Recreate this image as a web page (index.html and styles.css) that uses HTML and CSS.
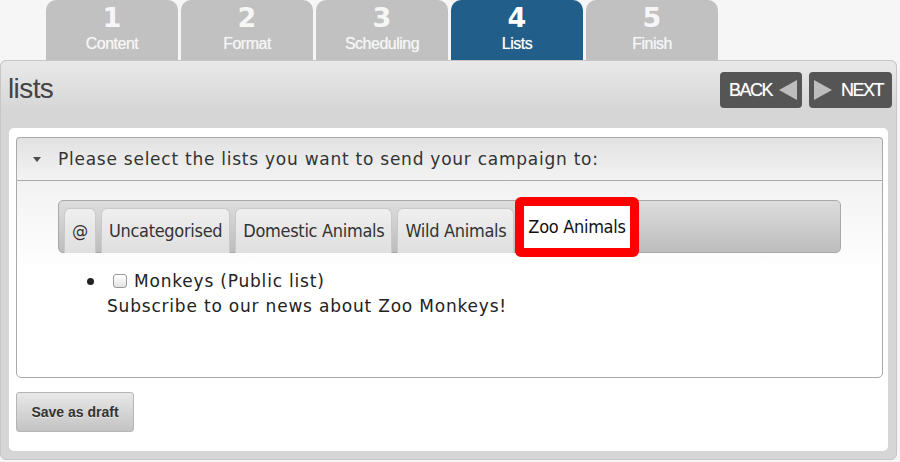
FILE: index.html
```html
<!DOCTYPE html>
<html lang="en">

<head>
    <meta charset="UTF-8">
    <meta name="viewport" content="width=device-width, initial-scale=1.0">
    <title>Campaign - Lists</title>
    <link rel="stylesheet" href="styles.css">
</head>

<body>
    <div class="wizard">
        <ol class="steps">
            <li class="step"><span class="num">1</span><span class="label">Content</span></li>
            <li class="step"><span class="num">2</span><span class="label">Format</span></li>
            <li class="step"><span class="num">3</span><span class="label">Scheduling</span></li>
            <li class="step current"><span class="num">4</span><span class="label">Lists</span></li>
            <li class="step"><span class="num">5</span><span class="label">Finish</span></li>
        </ol>

        <div class="panel">
            <div class="panel-head">
                <h1>lists</h1>
                <div class="nav">
                    <a class="nav-btn back" href="#">BACK<span class="arrow left"></span></a>
                    <a class="nav-btn next" href="#"><span class="arrow right"></span>NEXT</a>
                </div>
            </div>

            <div class="panel-body">
                <div class="section">
                    <h3 class="section-head"><span class="caret"></span>Please select the lists you want to send your campaign to:</h3>
                    <div class="section-body">
                        <ul class="cat-tabs">
                            <li>@</li>
                            <li>Uncategorised</li>
                            <li>Domestic Animals</li>
                            <li>Wild Animals</li>
                            <li class="active">Zoo Animals</li>
                        </ul>
                        <ul class="lists">
                            <li>
                                <label><input type="checkbox"> Monkeys (Public list)</label><br>
                                Subscribe to our news about Zoo Monkeys!
                            </li>
                        </ul>
                    </div>
                </div>
                <button class="draft" type="button">Save as draft</button>
            </div>
        </div>
    </div>
</body>

</html>
```

FILE: styles.css
```css
* {
    margin: 0;
    padding: 0;
    box-sizing: border-box;
}

ul,
ol {
    list-style: none;
}

body {
    background: #f6f6f6;
    font-family: "DejaVu Sans", Verdana, sans-serif;
    color: #333;
}

.wizard {
    width: 897px;
}

/* step tabs */
.steps {
    display: flex;
    gap: 3px;
    padding-left: 46px;
}

.step {
    width: 132px;
    height: 60px;
    padding-top: 3px;
    border-radius: 10px 10px 0 0;
    background: #c1c1c1;
    color: #f6f6f6;
    text-align: center;
}

.step.current {
    background: #215e8a;
    color: #fff;
}

.step .num {
    display: block;
    font: bold 27px/30px "DejaVu Sans", sans-serif;
}

.step .label {
    display: block;
    margin-top: 2px;
    font: 16px/18px "Liberation Sans", Arial, sans-serif;
    letter-spacing: -0.5px;
    text-shadow: 0 0 1px rgba(255, 255, 255, 0.6);
}

/* main panel */
.panel {
    border: 1px solid #c6c6c6;
    border-radius: 6px;
    background: #d6d6d6;
}

.panel-head {
    height: 67px;
    padding: 11px 4px 0 7px;
    display: flex;
    justify-content: space-between;
    align-items: flex-start;
    border-radius: 6px 6px 0 0;
    background: linear-gradient(#e9e9e9, #d6d6d6 75%);
}

.panel-head h1 {
    margin-top: 2px;
    font: normal 28px/30px "Liberation Sans", Arial, sans-serif;
    letter-spacing: -0.6px;
    color: #444;
}

.nav {
    display: flex;
    gap: 7px;
}

.nav-btn {
    height: 36px;
    display: flex;
    align-items: center;
    gap: 7px;
    padding: 0 5px 0 9px;
    border-radius: 4px;
    background: #555;
    color: #fff;
    text-decoration: none;
    font: 18px/1 "Liberation Sans", Arial, sans-serif;
    letter-spacing: -1.5px;
    text-shadow: 0 0 1px rgba(255, 255, 255, 0.5);
}

.nav-btn.next {
    padding: 0 9px 0 5px;
    gap: 9px;
}

.arrow {
    width: 0;
    height: 0;
    border-top: 10px solid transparent;
    border-bottom: 10px solid transparent;
}

.arrow.left {
    border-right: 18px solid #bdbdbd;
}

.arrow.right {
    border-left: 18px solid #bdbdbd;
}

.panel-body {
    margin: 0 8px 8px;
    padding: 9px 5px 19px 7px;
    border-radius: 5px;
    background: #fff;
}

/* accordion section */
.section-head {
    height: 43px;
    display: flex;
    align-items: center;
    border: 1px solid #a9a9a9;
    border-bottom: 0;
    border-radius: 4px 4px 0 0;
    background: linear-gradient(#e2e2e2, #f3f3f3);
    font-weight: normal;
    font-size: 17px;
    letter-spacing: 0.75px;
    color: #333;
}

.caret {
    width: 0;
    height: 0;
    margin: 0 17px 0 16px;
    border-left: 4px solid transparent;
    border-right: 4px solid transparent;
    border-top: 5px solid #4a4a4a;
}

.section-body {
    padding: 19px 41px 59px;
    border: 1px solid #a9a9a9;
    border-radius: 0 0 5px 5px;
    background: linear-gradient(#f2f2f2, #fff 90px);
}

.cat-tabs {
    height: 53px;
    display: flex;
    align-items: flex-end;
    gap: 5px;
    padding: 0 5px;
    border: 1px solid #a9a9a9;
    border-radius: 5px;
    background: linear-gradient(#dddddd, #bdbdbd);
}

.cat-tabs li {
    height: 45px;
    margin-bottom: -1px;
    padding: 0 7px 2px;
    display: flex;
    align-items: center;
    border: 1px solid #c9c9c9;
    border-bottom: 0;
    border-radius: 6px 6px 0 0;
    background: linear-gradient(#efefef, #dfdfdf);
    font: 18px "DejaVu Sans Condensed", "DejaVu Sans", sans-serif;
    letter-spacing: -0.3px;
    color: #333;
}

.cat-tabs li.active {
    height: 60px;
    margin: 0 0 -5px -4px;
    padding: 0 4px 2px;
    border: 9px solid #ff0000;
    border-radius: 6px;
    background: #fff;
    color: #111;
}

.lists {
    margin-top: 16px;
    padding-left: 49px;
    list-style: disc;
    font-size: 17px;
    line-height: 24px;
    letter-spacing: 0.8px;
    color: #222;
}

.lists li::marker {
    font-size: 22px;
}

.lists label {
    display: inline-flex;
    align-items: center;
    gap: 7px;
}

.lists input {
    appearance: none;
    width: 14px;
    height: 14px;
    margin-left: 6px;
    border: 1px solid #9a9a9a;
    border-radius: 3px;
    background: linear-gradient(#fff, #e4e4e4);
}

.draft {
    width: 118px;
    height: 40px;
    margin-top: 14px;
    border: 1px solid #b5b5b5;
    border-radius: 3px;
    background: linear-gradient(#e8e8e8, #c3c3c3);
    font: bold 14px "Liberation Sans", Arial, sans-serif;
    color: #333;
    text-shadow: 0 1px 0 rgba(255, 255, 255, 0.5);
}
```
